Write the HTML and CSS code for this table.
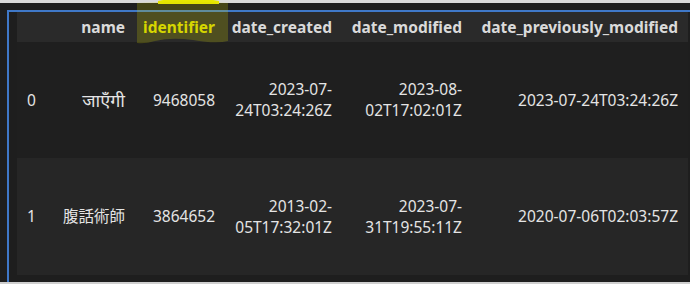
FILE: index.html
```html
<!DOCTYPE html>
<html>
<head>
<meta charset="utf-8">
<link rel="stylesheet" href="styles.css">
</head>
<body>
<div class="page">
  <div class="strip"></div>
  <div class="main">
    <div class="cell">
      <div class="table">
        <div class="row head">
          <div class="c idx"></div>
          <div class="c">name</div>
          <div class="c hl">identifier</div>
          <div class="c">date_created</div>
          <div class="c">date_modified</div>
          <div class="c">date_previously_modified</div>
        </div>
        <div class="row odd">
          <div class="c idx">0</div>
          <div class="c deva">जाएँगी</div>
          <div class="c">9468058</div>
          <div class="c">2023-07-<br>24T03:24:26Z</div>
          <div class="c">2023-08-<br>02T17:02:01Z</div>
          <div class="c">2023-07-24T03:24:26Z</div>
        </div>
        <div class="row even">
          <div class="c idx">1</div>
          <div class="c">腹話術師</div>
          <div class="c">3864652</div>
          <div class="c">2013-02-<br>05T17:32:01Z</div>
          <div class="c">2023-07-<br>31T19:55:11Z</div>
          <div class="c">2020-07-06T02:03:57Z</div>
        </div>
      </div>
    </div>
  </div>
  <div class="strip bottom"></div>
  <svg class="marker" width="100" height="46" viewBox="0 0 100 46">
    <path d="M27 1 Q55 -5 88 1 L88 4 L27 4 Z" fill="#e8e800"/>
    <path d="M6 3 Q50 0 97 3 L97 41 Q85 44 62 40 Q40 37 24 41 Q14 44 6 43 Z" fill="rgba(215,215,0,0.22)"/>
  </svg>
</div>
</body>
</html>
```
FILE: styles.css
```css
html, body {
  margin: 0;
  padding: 0;
  background: #1e1e1e;
}
.page {
  position: relative;
  width: 690px;
  height: 284px;
  display: flex;
  flex-direction: column;
  overflow: hidden;
  font-family: "Noto Sans", "Noto Sans CJK JP", sans-serif;
  font-size: 15.5px;
  color: #e4e4e4;
}
.strip {
  height: 3px;
  background: #dadada;
  flex: none;
}
.strip.bottom {
  height: 2px;
  background: #cfcfcf;
}
.main {
  flex: 1;
  padding-top: 7px;
  padding-left: 7px;
}
.cell {
  border-top: 2px solid #3f78c8;
  border-left: 2px solid #3f78c8;
  padding-left: 8px;
  height: 100%;
  box-sizing: border-box;
}
.table {
  display: grid;
  grid-template-columns: 33px 85px 90px 117px 130px 216px;
}
.row {
  display: contents;
}
.c {
  padding: 0 10px;
  text-align: right;
  display: flex;
  align-items: center;
  justify-content: flex-end;
  line-height: 21px;
  white-space: nowrap;
}
.c.deva {
  font-size: 18px;
}
.head .c {
  height: 30px;
  background: #2a2a2a;
  font-weight: bold;
  color: #dadada;
}
.head .c.hl {
  color: #d6d600;
}
.odd .c {
  height: 116px;
  background: #1f1f1f;
}
.even .c {
  height: 117px;
  background: #262626;
}
.c.idx {
  justify-content: flex-start;
}
.marker {
  position: absolute;
  left: 131px;
  top: 0;
}
```
